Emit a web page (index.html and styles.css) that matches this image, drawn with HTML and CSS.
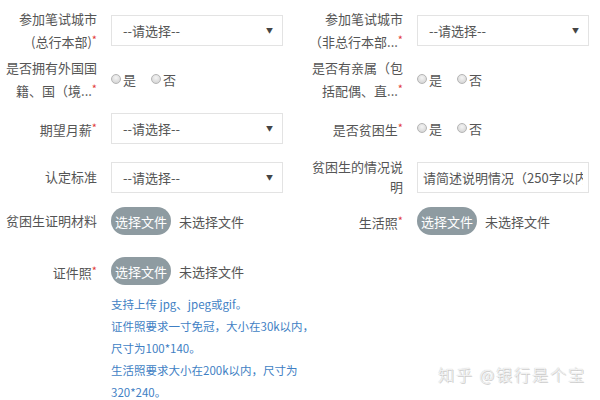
FILE: index.html
```html
<!DOCTYPE html>
<html lang="zh-CN">
<head>
  <meta charset="UTF-8" />
  <meta name="viewport" content="width=device-width, initial-scale=1" />
  <title>报名信息</title>
  <link rel="stylesheet" href="styles.css">
</head>
<body>
  <div class="form">
    <div class="row">
      <div class="field">
        <label>参加笔试城市<br>(总行本部)<i>*</i></label>
        <div class="select"><span>--请选择--</span><b>▼</b></div>
      </div>
      <div class="field">
        <label>参加笔试城市<br>（非总行本部...<i>*</i></label>
        <div class="select"><span>--请选择--</span><b>▼</b></div>
      </div>
    </div>

    <div class="row">
      <div class="field">
        <label>是否拥有外国国<br>籍、国（境...<i>*</i></label>
        <div class="radios">
          <span class="radio"><em></em>是</span>
          <span class="radio"><em></em>否</span>
        </div>
      </div>
      <div class="field">
        <label>是否有亲属（包<br>括配偶、直...<i>*</i></label>
        <div class="radios">
          <span class="radio"><em></em>是</span>
          <span class="radio"><em></em>否</span>
        </div>
      </div>
    </div>

    <div class="row">
      <div class="field">
        <label>期望月薪<i>*</i></label>
        <div class="select"><span>--请选择--</span><b>▼</b></div>
      </div>
      <div class="field">
        <label>是否贫困生<i>*</i></label>
        <div class="radios">
          <span class="radio"><em></em>是</span>
          <span class="radio"><em></em>否</span>
        </div>
      </div>
    </div>

    <div class="row">
      <div class="field">
        <label>认定标准</label>
        <div class="select"><span>--请选择--</span><b>▼</b></div>
      </div>
      <div class="field">
        <label>贫困生的情况说<br>明</label>
        <input class="text" type="text" placeholder="请简述说明情况（250字以内）">
      </div>
    </div>

    <div class="row files">
      <div class="field">
        <label>贫困生证明材料</label>
        <div class="upload"><span class="btn">选择文件</span>未选择文件</div>
      </div>
      <div class="field">
        <label>生活照<i>*</i></label>
        <div class="upload"><span class="btn">选择文件</span>未选择文件</div>
      </div>
    </div>

    <div class="row files last">
      <div class="field">
        <label>证件照<i>*</i></label>
        <div class="upload"><span class="btn">选择文件</span>未选择文件</div>
      </div>
    </div>

    <div class="tips">
      <p>支持上传 jpg、jpeg或gif。</p>
      <p>证件照要求一寸免冠，大小在30k以内，<br>尺寸为100*140。</p>
      <p>生活照要求大小在200k以内，尺寸为<br>320*240。</p>
    </div>
  </div>

  <div class="mark">知乎 @银行是个宝</div>
</body>
</html>
```

FILE: styles.css
```css
* {
  box-sizing: border-box;
}

body {
  margin: 0;
  width: 600px;
  height: 400px;
  position: relative;
  overflow: hidden;
  background: #fff;
  color: #555;
  font-family: "Noto Sans CJK SC", "Noto Sans", sans-serif;
  font-size: 13px;
}

.form {
  padding-top: 10px;
}

.row {
  display: flex;
  height: 40px;
  margin-bottom: 9px;
}

.row.files {
  height: 30px;
  margin-bottom: 20px;
}

.row.last {
  margin-bottom: 7px;
}

.field {
  flex: none;
  width: 306px;
  display: flex;
  align-items: center;
  gap: 14px;
}

.field + .field {
  width: auto;
}

.field label {
  width: 97px;
  flex-shrink: 0;
  text-align: right;
  line-height: 20px;
  color: #555;
  white-space: nowrap;
}

.field label i {
  font-style: normal;
  color: #e2393c;
  font-size: 11px;
  vertical-align: 3px;
}

.select {
  width: 172px;
  height: 31px;
  border: 1px solid #e3e3e3;
  display: flex;
  align-items: center;
  justify-content: space-between;
  padding: 0 9px 0 11px;
  color: #555;
}

.select b {
  font-weight: normal;
  font-size: 7px;
  color: #444;
}

.text {
  width: 172px;
  height: 31px;
  border: 1px solid #e3e3e3;
  padding: 0 5px;
  font-family: inherit;
  font-size: 13px;
  color: #555;
  outline: none;
}

.text::placeholder {
  color: #555;
}

.radios {
  display: flex;
  gap: 15px;
}

.radio {
  display: flex;
  align-items: center;
  gap: 2px;
}

.radio em {
  width: 10px;
  height: 10px;
  border-radius: 50%;
  border: 1px solid #b5b5b5;
  background: radial-gradient(circle at 50% 35%, #f4f4f4, #cfcfcf);
}

.upload {
  display: flex;
  align-items: center;
  gap: 8px;
  color: #555;
}

.upload .btn {
  width: 60px;
  height: 28px;
  border-radius: 14px;
  background: #8e9ba1;
  color: #fff;
  display: flex;
  align-items: center;
  justify-content: center;
}

.tips {
  margin-left: 111px;
  font-size: 11.5px;
  line-height: 22px;
  color: #3f7fc4;
}

.tips p {
  margin: 0;
}

.mark {
  position: absolute;
  right: 14px;
  bottom: 14px;
  font-size: 16px;
  font-weight: 300;
  color: #f7f7f7;
  text-shadow: 0 0 1px #b0b0b0, 1px 1px 0 #d0d0d0;
  letter-spacing: 2px;
}
```
